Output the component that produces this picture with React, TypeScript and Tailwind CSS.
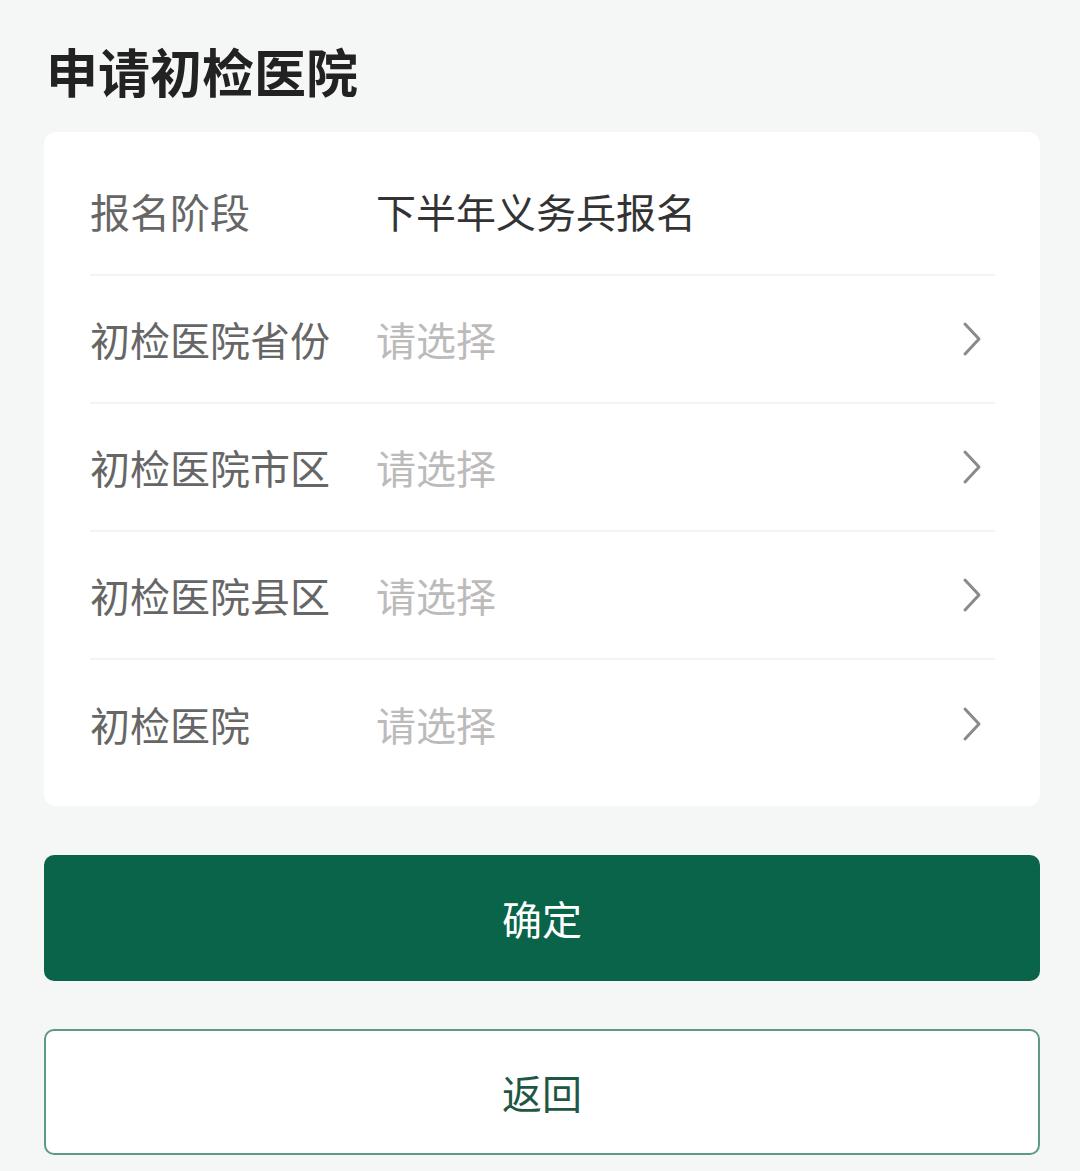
const font = { fontFamily: '"Noto Sans CJK SC", "Noto Sans", sans-serif' };

type Row = { label: string; value?: string };

const rows: Row[] = [
	{ label: "报名阶段", value: "下半年义务兵报名" },
	{ label: "初检医院省份" },
	{ label: "初检医院市区" },
	{ label: "初检医院县区" },
	{ label: "初检医院" },
];

function Chevron() {
	return (
		<svg width="22" height="36" viewBox="0 0 22 36" fill="none" className="shrink-0">
			<path d="M4 3l14 15L4 33" stroke="#8a8a8a" strokeWidth="3" strokeLinecap="round" strokeLinejoin="round" />
		</svg>
	);
}

export default function App() {
	return (
		<div className="min-h-[1171px] w-[1080px] bg-[#f5f7f6] pl-[44px] pr-[40px] pt-[34px]" style={font}>
			<h1 className="pl-[2px] text-[52px] font-bold leading-[74px] text-[#222222]">申请初检医院</h1>
			<div className="mt-[24px] rounded-[12px] bg-white pl-[46px] pr-[45px] pt-[16px] pb-[18px]">
				{rows.map((row, i) => (
					<div
						key={row.label}
						className={`flex h-[128px] items-center ${i < rows.length - 1 ? "border-b-2 border-[#f2f3f3]" : ""}`}
					>
						<div className="w-[286px] shrink-0 text-[40px] text-[#666666]">{row.label}</div>
						{row.value ? (
							<div className="flex-1 text-[40px] text-[#333333]">{row.value}</div>
						) : (
							<>
								<div className="flex-1 text-[40px] text-[#bbbbbb]">请选择</div>
								<div className="pr-[12px]">
									<Chevron />
								</div>
							</>
						)}
					</div>
				))}
			</div>
			<button className="mt-[49px] flex h-[126px] w-full items-center justify-center rounded-[10px] bg-[#0a6449] text-[40px] text-white">
				确定
			</button>
			<button className="mt-[48px] flex h-[126px] w-full items-center justify-center rounded-[10px] border-2 border-[#5c9a84] bg-white text-[40px] text-[#1f5745]">
				返回
			</button>
		</div>
	);
}
